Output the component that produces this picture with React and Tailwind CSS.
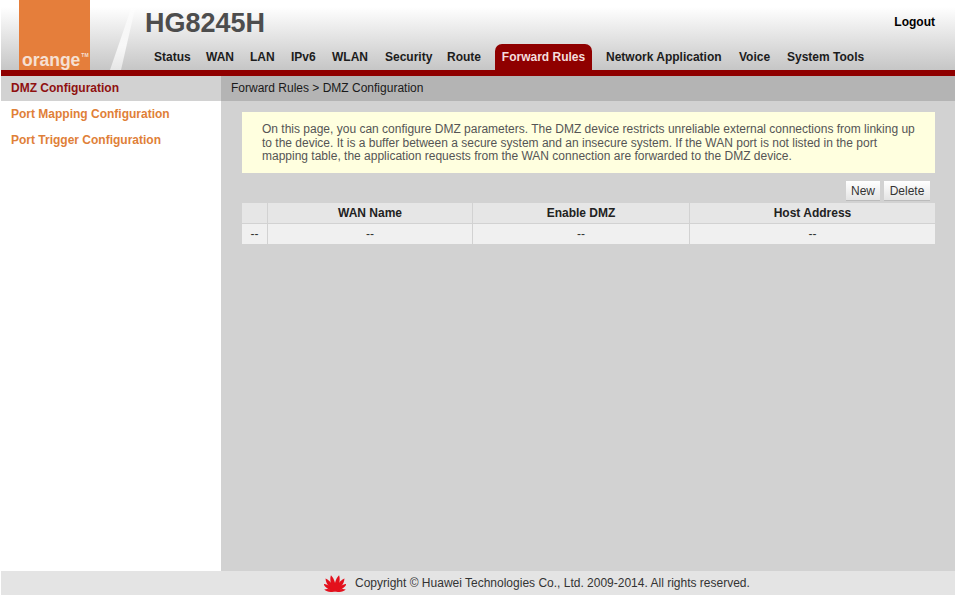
import React from 'react';

// label + slot width, so the items land where they do on the router page
const NAV = [
    { label: 'Status', w: 'w-[52px]' },
    { label: 'WAN', w: 'w-[44px]' },
    { label: 'LAN', w: 'w-[41px]' },
    { label: 'IPv6', w: 'w-[41px]' },
    { label: 'WLAN', w: 'w-[53px]' },
    { label: 'Security', w: 'w-[62px]' },
    { label: 'Route', w: 'w-[48px]' },
    { label: 'Forward Rules', active: true },
    { label: 'Network Application', w: 'w-[133px] ml-[14px]' },
    { label: 'Voice', w: 'w-[48px]' },
    { label: 'System Tools', w: '' },
];
const SIDE = ['DMZ Configuration', 'Port Mapping Configuration', 'Port Trigger Configuration'];
const COLS = ['w-[26px]', 'w-[205px]', 'w-[217px]', 'flex-1'];

function HuaweiLogo() {
    const petals = [[-80, 0.66], [-57, 0.84], [-36, 0.98], [-14, 1.02], [14, 1.02], [36, 0.98], [57, 0.84], [80, 0.66]];
    return (
        <svg width="22" height="18" viewBox="0 0 22 18" className="shrink-0">
            {petals.map(([a, s]) => (
                <path key={a} d="M11 17.5 C8.2 12 8.4 5 11 1 C13.6 5 13.8 12 11 17.5 Z" fill="#e3101c" transform={`rotate(${a} 11 17.5) translate(11 17.5) scale(${s}) translate(-11 -17.5)`} />
            ))}
        </svg>
    );
}

function Row({ cells, className }) {
    return (
        <div className={`flex h-5 ${className}`}>
            {cells.map((c, i) => (
                <div key={i} className={`${COLS[i]} flex items-center justify-center border-r border-[#d2d2d2] last:border-r-0`}>{c}</div>
            ))}
        </div>
    );
}

export default function App() {
    return (
        <div className="h-[595px] w-[955px] flex flex-col overflow-hidden bg-white border-l border-white text-[12px] font-['Liberation_Sans',Arial,sans-serif] text-[#222]">
            {/* top banner */}
            <div className="h-[70px] flex shrink-0 bg-gradient-to-b from-white from-10% to-[#c6c6c6]">
                <div className="ml-[18px] w-[71px] h-full bg-[#e57e3b] flex items-start pl-[3px] pt-[50px]">
                    <span className="text-[17.5px] leading-[20px] font-bold text-[#f6e0d2]">orange</span>
                    <span className="ml-px text-[5px] leading-[6px] font-bold text-[#f6e0d2] mt-[2px]">TM</span>
                </div>
                <svg className="ml-[19px] shrink-0" width="28" height="70" viewBox="0 0 28 70">
                    <defs>
                        <linearGradient id="slash" x1="0" y1="1" x2="0" y2="0">
                            <stop offset="0" stopColor="#ffffff" stopOpacity="0.55" />
                            <stop offset="0.35" stopColor="#ffffff" stopOpacity="0.8" />
                            <stop offset="0.8" stopColor="#ffffff" stopOpacity="0.5" />
                            <stop offset="1" stopColor="#ffffff" stopOpacity="0" />
                        </linearGradient>
                    </defs>
                    <path d="M25 0 L28 0 L12 70 L1 70 Z" fill="url(#slash)" />
                </svg>
                <div className="ml-[1px] flex-1 flex flex-col">
                    <div className="flex justify-between h-[44px]">
                        <div className="ml-[7px] pt-[8px] text-[27px] leading-[31px] font-bold text-[#4d4d4d]">HG8245H</div>
                        <div className="pt-[15px] pr-[20px] font-bold text-black leading-[14px]">Logout</div>
                    </div>
                    <div className="flex h-[26px] pl-[16px]">
                        {NAV.map((n) =>
                            n.active ? (
                                <div key={n.label} className="w-[97px] text-center rounded-t-[7px] bg-[#8f0000] text-[#f4dddd] font-bold leading-[26px]">{n.label}</div>
                            ) : (
                                <div key={n.label} className={`${n.w} shrink-0 font-bold text-[#1c1c1c] leading-[26px]`}>{n.label}</div>
                            )
                        )}
                    </div>
                </div>
            </div>
            <div className="h-[6px] shrink-0 bg-[#8f0000]" />

            <div className="flex-1 flex min-h-0">
                {/* side menu */}
                <div className="w-[220px] shrink-0 bg-white">
                    {SIDE.map((s, i) => (
                        <div key={s} className={i === 0 ? 'h-[25px] pl-[10px] leading-[24px] font-bold text-[#8f1010] bg-[#d2d2d2]' : 'h-[26px] pl-[10px] leading-[26px] font-bold text-[#df8038]'}>{s}</div>
                    ))}
                </div>

                <div className="flex-1 flex flex-col bg-[#d2d2d2]">
                    <div className="h-[25px] pl-[10px] leading-[24px] bg-[#b4b4b4] text-[#1a1a1a]">Forward Rules &gt; DMZ Configuration</div>
                    <div className="pl-[21px] pr-[20px] pt-[11px]">
                        <div className="h-[61px] pl-[20px] pr-[16px] pt-[11px] leading-[13.5px] bg-[#ffffdf] text-[#555]">
                            On this page, you can configure DMZ parameters. The DMZ device restricts unreliable external connections from linking up to the device. It is a buffer between a secure system and an insecure system. If the WAN port is not listed in the port mapping table, the application requests from the WAN connection are forwarded to the DMZ device.
                        </div>
                        <div className="flex justify-end gap-[4px] pr-[5px] mt-[8px] mb-[2px]">
                            <button className="h-5 w-[34px] bg-gradient-to-b from-white to-[#e4e4e4] border-b border-[#bbb] text-[#333]">New</button>
                            <button className="h-5 w-[46px] bg-gradient-to-b from-white to-[#e4e4e4] border-b border-[#bbb] text-[#333]">Delete</button>
                        </div>
                        <Row cells={['', 'WAN Name', 'Enable DMZ', 'Host Address']} className="bg-[#e6e6e6] font-bold text-[#222]" />
                        <div className="h-px" />
                        <Row cells={['--', '--', '--', '--']} className="bg-[#f0f0f0] text-[#333]" />
                    </div>
                </div>
            </div>

            {/* footer */}
            <div className="h-6 shrink-0 bg-[#e4e4e4] flex items-center gap-[9px] pl-[323px] text-[#333]">
                <HuaweiLogo />
                <span>Copyright © Huawei Technologies Co., Ltd. 2009-2014. All rights reserved.</span>
            </div>
        </div>
    );
}
